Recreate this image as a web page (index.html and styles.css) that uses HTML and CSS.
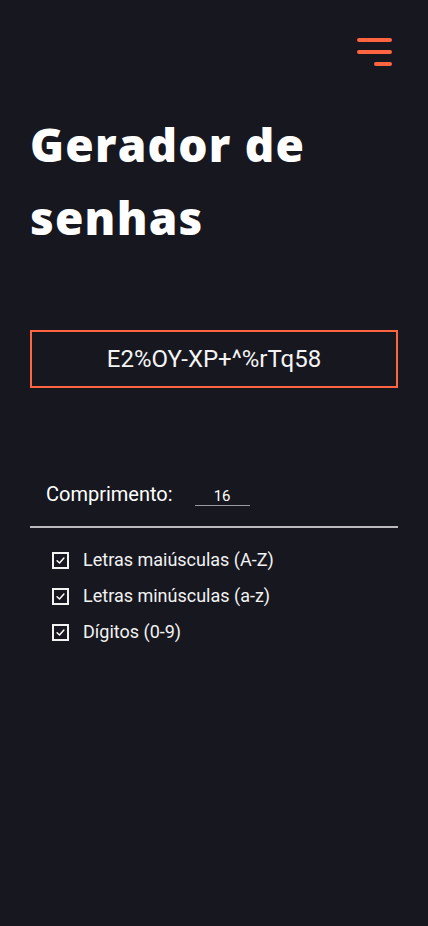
FILE: index.html
```html
<!DOCTYPE html>
<html lang="pt">
<head>
<meta charset="utf-8">
<title>Gerador de senhas</title>
<link rel="stylesheet" href="styles.css">
</head>
<body>
<div class="page">
  <header class="topbar">
    <button class="menu" aria-label="Menu">
      <span class="bar bar-long"></span>
      <span class="bar bar-long"></span>
      <span class="bar bar-short"></span>
    </button>
  </header>
  <h1 class="title">Gerador de<br>senhas</h1>
  <div class="password">E2%OY-XP+^%rTq58</div>
  <div class="length-row">
    <span class="length-label">Comprimento:</span>
    <span class="length-input">16</span>
  </div>
  <hr class="divider">
  <ul class="options">
    <li class="option"><span class="check"><svg viewBox="0 0 16 16" width="16" height="16"><path d="M3.8 8.2 L6.8 11 L12.2 5" fill="none" stroke="#fff" stroke-width="1.8" stroke-linecap="round" stroke-linejoin="round"/></svg></span>Letras maiúsculas (A-Z)</li>
    <li class="option"><span class="check"><svg viewBox="0 0 16 16" width="16" height="16"><path d="M3.8 8.2 L6.8 11 L12.2 5" fill="none" stroke="#fff" stroke-width="1.8" stroke-linecap="round" stroke-linejoin="round"/></svg></span>Letras minúsculas (a-z)</li>
    <li class="option"><span class="check"><svg viewBox="0 0 16 16" width="16" height="16"><path d="M3.8 8.2 L6.8 11 L12.2 5" fill="none" stroke="#fff" stroke-width="1.8" stroke-linecap="round" stroke-linejoin="round"/></svg></span>Dígitos (0-9)</li>
  </ul>
</div>
</body>
</html>
```

FILE: styles.css
```css
* { box-sizing: border-box; }
html, body {
  margin: 0;
  padding: 0;
  background: #171720;
  color: #ffffff;
  font-family: Roboto, "Liberation Sans", sans-serif;
}
.page {
  width: 428px;
  min-height: 926px;
  padding: 0 30px;
}
.topbar {
  display: flex;
  justify-content: flex-end;
  padding-top: 38px;
  margin-right: 6px;
}
.menu {
  display: flex;
  flex-direction: column;
  align-items: flex-end;
  gap: 8px;
  padding: 0;
  border: 0;
  background: none;
}
.bar {
  display: block;
  height: 4px;
  border-radius: 2px;
  background: #ff6540;
}
.bar-long { width: 35px; }
.bar-short { width: 18px; }
.title {
  margin: 42px 0 0;
  font-family: "Open Sans", "DejaVu Sans", sans-serif;
  font-weight: 800;
  font-size: 46px;
  line-height: 73px;
  letter-spacing: 1.2px;
}
.password {
  margin-top: 76px;
  height: 58px;
  border: 2px solid #ff6540;
  display: flex;
  align-items: center;
  justify-content: center;
  font-size: 24px;
  color: #f4f4f4;
}
.length-row {
  display: flex;
  align-items: baseline;
  margin-top: 94px;
  padding-left: 16px;
}
.length-label {
  font-size: 20px;
  line-height: 24px;
}
.length-input {
  margin-left: 22px;
  width: 55px;
  border-bottom: 1px solid #9a9aa2;
  text-align: center;
  font-size: 15px;
  line-height: 18px;
}
.divider {
  margin: 20px 0 0;
  border: 0;
  height: 2px;
  background: #b9b9be;
}
.options {
  list-style: none;
  margin: 20px 0 0;
  padding: 0 0 0 22px;
  display: flex;
  flex-direction: column;
  gap: 12px;
}
.option {
  display: flex;
  align-items: center;
  font-size: 18px;
  line-height: 24px;
  color: #f2f2f2;
}
.check {
  width: 17px;
  height: 17px;
  border: 2px solid #f2f2f2;
  margin-right: 14px;
  display: flex;
  align-items: center;
  justify-content: center;
}
.check svg { width: 13px; height: 13px; }
```
